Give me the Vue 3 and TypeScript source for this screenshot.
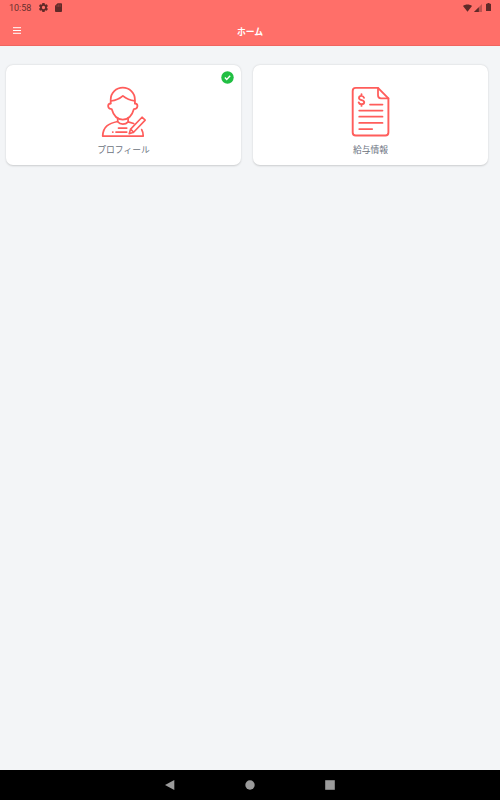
<script setup lang="ts">
interface Tile {
  id: 'profile' | 'salary'
  label: string
  done: boolean
}

const title = 'ホーム'
const clock = '10:58'
const tiles: Tile[] = [
  { id: 'profile', label: 'プロフィール', done: true },
  { id: 'salary', label: '給与情報', done: false },
]
</script>

<template>
  <div class="screen">
    <header class="top">
      <div class="status">
        <span class="clock">{{ clock }}</span>
        <svg class="gear" viewBox="0 0 24 24"><path fill-rule="evenodd" d="M19.4 13a7.500 7.500 0 0 0 0-2l2.100-1.600a.5.5 0 0 0 .1-.6l-2-3.500a.5.5 0 0 0-.6-.2l-2.500 1a7 7 0 0 0-1.700-1l-.4-2.700a.5.5 0 0 0-.5-.4h-4a.5.5 0 0 0-.5.4L9 5.100a7 7 0 0 0-1.700 1l-2.500-1a.5.5 0 0 0-.6.2l-2 3.500a.5.5 0 0 0 .1.600L4.500 11a8 8 0 0 0 0 2l-2.200 1.600a.5.5 0 0 0-.1.600l2 3.500c.1.200.4.300.6.200l2.500-1a7 7 0 0 0 1.700 1l.4 2.700c0 .2.200.4.5.4h4c.3 0 .5-.2.500-.4l.4-2.700a7 7 0 0 0 1.700-1l2.500 1c.2.100.5 0 .6-.2l2-3.500a.5.5 0 0 0-.1-.6zM12 15.600a3.600 3.600 0 1 1 0-7.200 3.600 3.600 0 0 1 0 7.200z" /></svg>
        <svg class="sd" viewBox="0 0 16 20"><path d="M14 0H6L0 6v12a2 2 0 0 0 2 2h12a2 2 0 0 0 2-2V2a2 2 0 0 0-2-2z" /><path class="slots" d="M4.700 4.500v4M8.200 3v5.500M11.700 3v5.500" /></svg>
        <span class="spacer"></span>
        <svg class="wifi" viewBox="0 0 24 20"><path d="M12 20 0 4.500C3 2 7 .5 12 .5S21 2 24 4.500z" /></svg>
        <svg class="signal" viewBox="0 0 20 20"><path opacity=".4" d="M0 20 20 0v20z" /><path d="M0 20 12 8v12z" /></svg>
        <svg class="battery" viewBox="0 0 10 16"><path d="M3 0h4v1.500h2a1 1 0 0 1 1 1V15a1 1 0 0 1-1 1H1a1 1 0 0 1-1-1V2.500a1 1 0 0 1 1-1h2z" /></svg>
      </div>
      <div class="bar">
        <button class="menu" type="button">
          <svg viewBox="0 0 8 7"><path d="M0 .7h8M0 3.500h8M0 6.300h8" /></svg>
        </button>
        <h1>{{ title }}</h1>
      </div>
    </header>

    <main class="grid">
      <section v-for="tile in tiles" :key="tile.id" class="card">
        <svg v-if="tile.done" class="check" viewBox="0 0 13 13">
          <circle cx="6.500" cy="6.500" r="6.200" />
          <path d="m3.900 6.600 1.800 1.800 3.500-3.600" />
        </svg>
        <svg v-if="tile.id === 'profile'" class="art" viewBox="0 0 48 54">
          <path d="M10.700 18.500V14.500a12.100 11.900 0 0 1 24.200 0V18.500" />
          <path d="M10.900 16c4.600-.5 8.800-2.300 12-5.100 3.200 2.600 7.200 4.400 11.800 5" />
          <path d="M10.500 18.300c-3.400.5-3.200 5.600 1.200 5.700 1.600 6 5.500 10.500 11.100 10.500S32.300 30 33.900 24c4.400-.1 4.600-5.200 1.200-5.700" />
          <path d="M17.700 33v3.500c-9 2-14.700 5-15 14.600h40.500c0-2.700-.4-4.700-1.500-6.500" />
          <path d="M17.700 36.800c2.600 3 7.700 3 10.400 0V33M28.100 36.800l5.600 1.700" />
          <path class="fine" d="m29.200 48.700 1.400-4.600L42 32.200l3.200 2.900-11.600 12.200zM30.600 44.100l3 3.200" />
          <path d="M18.500 43h8.200M16 47h10.700M12.700 47h.2" />
        </svg>
        <svg v-else class="art" viewBox="0 0 48 54">
          <path class="bold" d="M31 2.900H8.700a3 3 0 0 0-3 3v41.600a3 3 0 0 0 3 3h29.700a3 3 0 0 0 3-3V13.300z" />
          <path d="M31 2.900v7.400a3 3 0 0 0 3 3h7.400" />
          <path d="M23 19.500h12.500M12.200 25.600h23.300M12.200 31.700h23.300M12.200 37.900h23.300M12.200 44.100h13" />
          <path class="bold" d="M17 12.800c-.5-1.400-1.300-1.900-2.500-1.900-1.500 0-2.500.8-2.500 2 0 2.800 5.200 1.500 5.200 4.300 0 1.400-1.100 2.100-2.700 2.100-1.400 0-2.400-.6-2.800-1.900M14.500 9.300v1.600M14.500 19.300v1.600" />
        </svg>
        <span class="label">{{ tile.label }}</span>
      </section>
    </main>

    <nav class="nav">
      <svg viewBox="0 0 10 10"><path d="M0 5 9.300 0v10z" /></svg>
      <svg viewBox="0 0 10 10"><circle cx="5" cy="5" r="4.700" /></svg>
      <svg viewBox="0 0 10 10"><path d="M.2.200h9.600v9.600H.2z" /></svg>
    </nav>
  </div>
</template>

<style>
body {
  margin: 0;
}
</style>

<style scoped>
.screen {
  display: flex;
  flex-direction: column;
  width: 500px;
  height: 800px;
  background: #f3f5f7;
  font-family: 'Noto Sans CJK JP', sans-serif;
}
.top {
  box-sizing: border-box;
  height: 46px;
  background: #ff6f69;
  border-bottom: 1px solid #f0655f;
}
.status {
  display: flex;
  align-items: center;
  box-sizing: border-box;
  height: 15px;
  padding: 0 9px;
}
.status svg {
  fill: #5f2a28;
}
.clock {
  width: 29px;
  padding-top: 1px;
  font: 9px/14px Roboto, sans-serif;
  color: #67302e;
}
.gear {
  width: 11px;
  height: 11px;
}
.sd {
  width: 7px;
  height: 9px;
  margin-left: 6px;
}
.slots {
  stroke: #ab4a46;
  stroke-width: 1.3;
}
.spacer {
  flex: 1;
}
.wifi {
  width: 9px;
  height: 8px;
}
.signal {
  width: 8px;
  height: 8px;
  margin: 0 4px 0 2px;
}
.battery {
  width: 5px;
  height: 8px;
  margin-bottom: 1px;
}
.bar {
  display: grid;
  grid-template-columns: 40px 1fr 40px;
  align-items: center;
  height: 31px;
}
.menu {
  display: flex;
  margin: 0;
  padding: 0 0 0 13px;
  border: 0;
  background: none;
}
.menu svg {
  width: 8px;
  height: 7px;
  stroke: #fff;
  stroke-width: 1;
}
h1 {
  margin: 0;
  padding-top: 2px;
  text-align: center;
  font-size: 8.8px;
  font-weight: 700;
  line-height: 14px;
  color: #fff;
}
.grid {
  flex: 1;
  display: grid;
  grid-template-columns: 235px 235px;
  column-gap: 12px;
  align-content: start;
  padding: 19px 6px;
}
.card {
  position: relative;
  box-sizing: border-box;
  display: flex;
  flex-direction: column;
  align-items: center;
  height: 100px;
  padding-top: 20px;
  border-radius: 7px;
  background: #fff;
  box-shadow: 0 0.5px 2px rgba(0, 0, 0, 0.17);
}
.check {
  position: absolute;
  top: 6px;
  right: 7px;
  width: 13px;
  height: 13px;
  fill: #21bf43;
}
.check path {
  fill: none;
  stroke: #fff;
  stroke-width: 1.4;
}
.art {
  width: 48px;
  height: 54px;
  fill: none;
  stroke: #ff5d5b;
  stroke-width: 1.75;
  stroke-linecap: round;
  stroke-linejoin: round;
}
.bold {
  stroke-width: 1.9;
}
.fine {
  stroke-width: 1.6;
}
.label {
  margin-top: 4px;
  font-size: 8.8px;
  line-height: 14px;
  color: #6b7280;
}
.nav {
  display: flex;
  justify-content: center;
  align-items: center;
  gap: 70px;
  height: 30px;
  background: #000;
}
.nav svg {
  width: 10px;
  height: 10px;
  fill: #9b9b9b;
}
</style>
